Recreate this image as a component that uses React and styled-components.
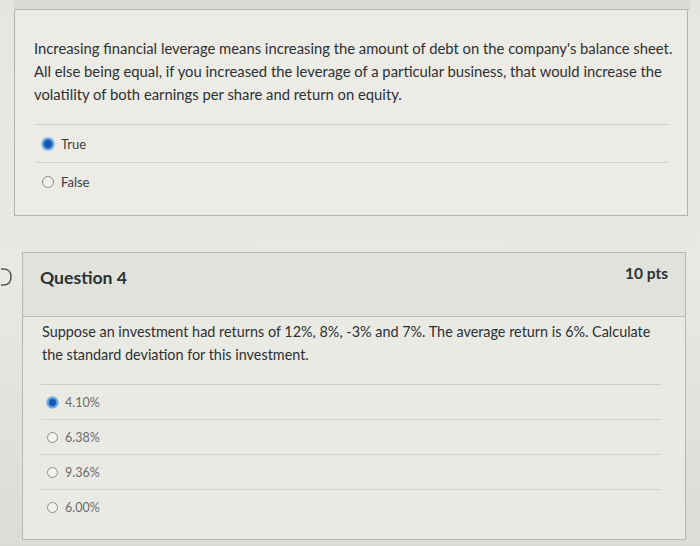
import React from 'react';
import styled, { createGlobalStyle } from 'styled-components';

const GlobalStyle = createGlobalStyle`
	body {
		margin: 0;
		background: #e2e2dc;
		font-family: Lato, "Open Sans", sans-serif;
		color: #2f3436;
	}
`;

const questions = [
	{
		id: 3,
		text: "Increasing financial leverage means increasing the amount of debt on the company's balance sheet. All else being equal, if you increased the leverage of a particular business, that would increase the volatility of both earnings per share and return on equity.",
		answers: ['True', 'False'],
		selected: 0,
	},
	{
		id: 4,
		points: '10 pts',
		text: 'Suppose an investment had returns of 12%, 8%, -3% and 7%. The average return is 6%. Calculate the standard deviation for this investment.',
		answers: ['4.10%', '6.38%', '9.36%', '6.00%'],
		selected: 0,
	},
];

function Flag() {
	return (
		<FlagIcon width="12" height="20" viewBox="0 0 12 20">
			<path d="M-4 2 H3 C8 2 10 6 10 10 C10 14 8 18 3 18 H-4" fill="none" stroke="#555" strokeWidth="1.6" />
		</FlagIcon>
	);
}

class App extends React.Component {
	render() {
		const [first, second] = questions;
		return (
			<Page>
				<GlobalStyle />
				<TopStrip />
				<FirstCard>
					<Prompt $size={14.8} $left={19} $right={14}>{first.text}</Prompt>
					<AnswerList $left={21} $right={18}>
						{first.answers.map((a, i) => (
							<Answer key={a} $h={37}>
								<Radio $on={i === first.selected} $size={12} />
								<AnswerText $large>{a}</AnswerText>
							</Answer>
						))}
					</AnswerList>
				</FirstCard>
				<SecondCard>
					<Flag />
					<Header>
						<Title>Question {second.id}</Title>
						<Points>{second.points}</Points>
					</Header>
					<Body>
						<Prompt $size={14.4} $left={19} $right={30}>{second.text}</Prompt>
						<AnswerList $left={18} $right={24}>
							{second.answers.map((a, i) => (
								<Answer key={a} $h={34}>
									<Radio $on={i === second.selected} $size={11} />
									<AnswerText>{a}</AnswerText>
								</Answer>
							))}
						</AnswerList>
					</Body>
				</SecondCard>
			</Page>
		);
	}
}

export default App;

const Page = styled.div`
	width: 700px;
	height: 546px;
	overflow: hidden;
	background: linear-gradient(180deg, #e6e6e0 0%, #e9e9e4 50%, #dcdcd6 100%);
`;

const TopStrip = styled.div`
	height: 9px;
	margin: 0 10px 0 14px;
	background: #dcdcd6;
	border-bottom: 1px solid #b9b9b3;
`;

const FirstCard = styled.section`
	margin-left: 14px;
	width: 674px;
	height: 206px;
	box-sizing: border-box;
	padding-top: 27px;
	background: #ecebe6;
	border: 1px solid #b4b4ae;
	border-top: none;
`;

const Prompt = styled.p`
	margin: 0 0 18px;
	padding: 0 ${(p) => p.$right}px 0 ${(p) => p.$left}px;
	font-size: ${(p) => p.$size}px;
	line-height: 23px;
	color: #2c3133;
`;

const AnswerList = styled.div`
	margin: 0 ${(p) => p.$right}px 0 ${(p) => p.$left}px;
	border-top: 1px solid #cfcfc9;
`;

const Answer = styled.label`
	display: flex;
	align-items: center;
	gap: 7px;
	height: ${(p) => p.$h}px;
	padding-left: 6px;
	border-bottom: 1px solid #d3d3cd;
	&:last-child {
		border-bottom: none;
	}
`;

const Radio = styled.span`
	width: ${(p) => p.$size}px;
	height: ${(p) => p.$size}px;
	box-sizing: border-box;
	border-radius: 50%;
	flex-shrink: 0;
	border: ${(p) => (p.$on ? '2px solid #5aa0e0' : '1px solid #8f8f8a')};
	background: ${(p) => (p.$on ? '#1a57b0' : '#f2f2ee')};
	box-shadow: ${(p) => (p.$on ? '0 0 0 1px #a8c8ea' : 'none')};
`;

const AnswerText = styled.span`
	font-size: ${(p) => (p.$large ? '13px' : '12.5px')};
	color: ${(p) => (p.$large ? '#3a3f42' : '#6a6c6c')};
`;

const SecondCard = styled.section`
	position: relative;
	margin: 36px 0 0 22px;
	width: 664px;
	height: 288px;
	box-sizing: border-box;
	background: #eaeae5;
	border: 1px solid #b7b7b1;
`;

const FlagIcon = styled.svg`
	position: absolute;
	left: -22px;
	top: 14px;
`;

const Header = styled.header`
	display: flex;
	justify-content: space-between;
	align-items: flex-start;
	height: 50px;
	padding: 13px 17px 0;
	background: #e2e2dd;
	border-bottom: 1px solid #bcbcb6;
`;

const Title = styled.h2`
	margin: 0;
	font-size: 17.6px;
	line-height: 24px;
	font-weight: 700;
	color: #2c3133;
`;

const Points = styled.span`
	margin-top: -3px;
	font-size: 15.5px;
	line-height: 20px;
	font-weight: 700;
	color: #2c3133;
`;

const Body = styled.div`
	padding-top: 3px;
`;
